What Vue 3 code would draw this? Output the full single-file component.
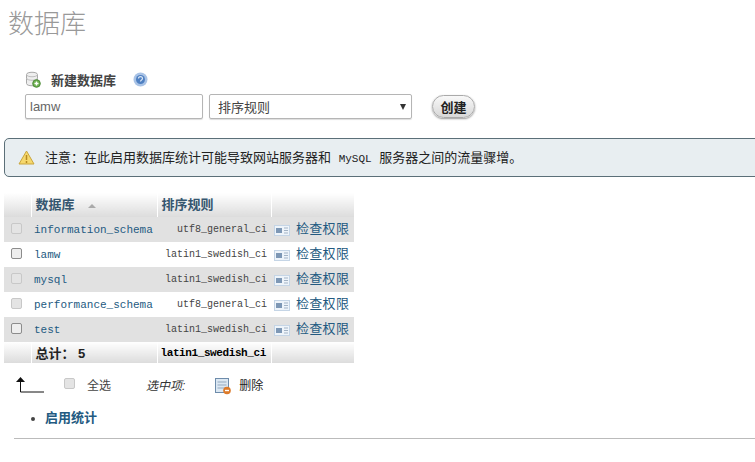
<template>
  <div class="page">
    <h1 class="title">数据库</h1>

    <form class="create" @submit.prevent>
      <div class="create__label">
        <svg class="icon" width="16" height="17" viewBox="0 0 16 17">
          <path d="M1.500 3.500c0-3 11-3 11 0v9c0 3-11 3-11 0z" fill="#eeeeee" stroke="#a8a8a8" />
          <path d="M1.500 3.500c0 3 11 3 11 0M1.500 7c0 3 11 3 11 0" fill="none" stroke="#bdbdbd" />
          <circle cx="11.500" cy="12.500" r="3.800" fill="#6cb04e" stroke="#4d8a38" />
          <path d="M9.500 12.500h4M11.500 10.500v4" stroke="#fff" stroke-width="1.400" />
        </svg>
        <strong>新建数据库</strong>
        <svg class="help" width="15" height="15" viewBox="0 0 15 15">
          <circle cx="7.500" cy="7.500" r="7" fill="#a9c3e6" />
          <circle cx="7.500" cy="7.500" r="4.500" fill="#4f80c2" />
          <path d="M5.500 6.500c0-2.600 4-2.600 4 0 0 1.500-2 1.500-2 3" fill="none" stroke="#dbe7f6" stroke-width="1.200" />
        </svg>
      </div>
      <div class="create__fields">
        <input class="input" value="lamw" />
        <div class="select">
          <span>排序规则</span>
          <i class="select__arrow"></i>
        </div>
        <button class="btn">创建</button>
      </div>
    </form>

    <div class="notice">
      <svg width="17" height="15" viewBox="0 0 17 15">
        <path d="M8.500 1 16 14H1z" fill="#f6d86d" stroke="#c9a53c" stroke-linejoin="round" />
        <path d="M8.500 5v5M8.500 11v2" stroke="#b78a22" stroke-width="1.500" />
      </svg>
      <span>注意：在此启用数据库统计可能导致网站服务器和 <span class="mono">MySQL</span> 服务器之间的流量骤增。</span>
    </div>

    <table class="dbs">
      <thead>
        <tr>
          <th></th>
          <th class="sort">数据库 <i class="sort__arrow"></i></th>
          <th>排序规则</th>
          <th></th>
        </tr>
      </thead>
      <tbody>
        <tr v-for="db in databases" :key="db.name">
          <td class="check"><span class="box" :class="{ off: db.system }"></span></td>
          <td class="name">{{ db.name }}</td>
          <td class="coll">{{ db.collation }}</td>
          <td class="act">
            <svg width="16" height="11" viewBox="0 0 16 11">
              <rect x="0.500" y="0.500" width="15" height="10" fill="#eef4fa" stroke="#c5d5e6" />
              <rect x="2" y="3" width="6" height="5" fill="#7d97b5" />
              <path d="M10 3h4M10 5.500h4M10 8h4" stroke="#a3b3c5" />
            </svg>
            <a>检查权限</a>
          </td>
        </tr>
      </tbody>
      <tfoot>
        <tr>
          <th></th>
          <th class="total">总计： 5</th>
          <th class="total-coll">latin1_swedish_ci</th>
          <th></th>
        </tr>
      </tfoot>
    </table>

    <div class="bulk">
      <svg class="bulk__arrow" width="30" height="17" viewBox="0 0 30 17">
        <path d="M5.500 5v11H29" fill="none" stroke="#111" />
        <path d="M1 6l4.500-5L10 6z" fill="#111" />
      </svg>
      <span class="box off"></span>
      <span class="bulk__all">全选</span>
      <em>选中项:</em>
      <svg class="bulk__icon" width="17" height="17" viewBox="0 0 17 17">
        <rect x="0.500" y="0.500" width="13" height="14" fill="#dce8f3" stroke="#6e8cab" />
        <path d="M2.500 4h9M2.500 7h9M2.500 10h9" stroke="#94a9bf" />
        <circle cx="12" cy="12.500" r="3.800" fill="#dd7a2a" />
        <path d="M10 12.500h4" stroke="#fff" stroke-width="1.400" />
      </svg>
      <span class="bulk__del">删除</span>
    </div>

    <ul class="links">
      <li><a>启用统计</a></li>
    </ul>

    <hr class="rule" />
  </div>
</template>

<script setup>
const databases = [
  { name: "information_schema", collation: "utf8_general_ci", system: true },
  { name: "lamw", collation: "latin1_swedish_ci", system: false },
  { name: "mysql", collation: "latin1_swedish_ci", system: true },
  { name: "performance_schema", collation: "utf8_general_ci", system: true },
  { name: "test", collation: "latin1_swedish_ci", system: false },
];
</script>

<style>
body {
  background: #fff;
  overflow: hidden;
}
</style>

<style scoped>
.page {
  width: 755px;
  height: 462px;
  overflow: hidden;
  font-family: "Liberation Sans", "Noto Sans CJK SC", sans-serif;
  font-size: 12px;
  color: #444;
}

.mono {
  margin: 0 4px;
  font-family: "Liberation Mono", monospace;
  font-size: 11px;
}

.title {
  margin: 0;
  padding: 6px 0 0 8px;
  height: 56px;
  box-sizing: border-box;
  font-size: 26px;
  line-height: 36px;
  font-weight: 300;
  color: #999;
}

.create {
  margin: 0 0 0 25px;
}

.create__label {
  display: flex;
  align-items: center;
  height: 38px;
  padding-top: 8px;
  box-sizing: border-box;
}

.create__label strong {
  margin-left: 10px;
  font-size: 13px;
  color: #444;
}

.help {
  margin-left: 17px;
}

.create__fields {
  display: flex;
  align-items: center;
}

.input {
  width: 178px;
  height: 25px;
  box-sizing: border-box;
  padding: 0 4px;
  border: 1px solid #b5b5b5;
  border-radius: 2px;
  font: 13px "Liberation Sans", sans-serif;
  color: #666;
  box-shadow: 0 1px 1px #ddd;
}

.select {
  display: flex;
  align-items: center;
  justify-content: space-between;
  width: 203px;
  height: 25px;
  box-sizing: border-box;
  margin-left: 6px;
  padding: 0 5px 0 8px;
  border: 1px solid #b5b5b5;
  border-radius: 2px;
  font-size: 13px;
  color: #444;
  box-shadow: 0 1px 1px #ddd;
}

.select__arrow {
  width: 0;
  height: 0;
  border-left: 3.500px solid transparent;
  border-right: 3.500px solid transparent;
  border-top: 6px solid #333;
}

.btn {
  width: 43px;
  height: 23px;
  margin-left: 20px;
  padding: 0;
  border: 1px solid #aaa;
  border-radius: 12px;
  background: linear-gradient(#f8f8f8, #d8d8d8);
  font-family: inherit;
  font-size: 13px;
  font-weight: 700;
  color: #222;
  box-shadow: 0 1px 2px #999;
}

.notice {
  display: flex;
  align-items: center;
  gap: 10px;
  width: 800px;
  height: 39px;
  box-sizing: border-box;
  margin: 19px 0 0 4px;
  padding: 0 0 3px 13px;
  border: 1px solid #5b6f78;
  border-radius: 5px;
  background: #e8eef1;
  font-size: 13px;
  color: #222;
}

.notice svg {
  margin-top: 3px;
}

.dbs {
  width: 350px;
  margin: 16px 0 0 4px;
  border-collapse: collapse;
  table-layout: fixed;
}

.dbs th {
  box-sizing: border-box;
  padding: 0 4px;
  text-align: left;
  border-left: 1px solid #fff;
  background: linear-gradient(#fff, #dcdcdc);
  font-size: 13px;
  color: #35566f;
}

.dbs thead th {
  padding-bottom: 3px;
}

.dbs th:first-child {
  width: 27px;
  border-left: 0;
}

.dbs th:nth-child(2) {
  width: 126px;
}

.dbs th:nth-child(3) {
  width: 114px;
}

.dbs thead tr {
  height: 24px;
}

.dbs tfoot tr {
  height: 21px;
}

.dbs tfoot th {
  color: #222;
}

.sort__arrow {
  display: inline-block;
  margin-left: 10px;
  vertical-align: 1px;
  border-left: 4px solid transparent;
  border-right: 4px solid transparent;
  border-bottom: 4px solid #aaa;
}

.dbs tbody tr {
  height: 25px;
}

.dbs tbody tr:nth-child(odd) {
  background: #e1e1e1;
}

.dbs td {
  padding: 0;
  white-space: nowrap;
  font-family: "Liberation Mono", monospace;
  font-size: 11px;
}

.check {
  padding-left: 7px !important;
}

.box {
  display: inline-block;
  width: 11px;
  height: 11px;
  box-sizing: border-box;
  margin-bottom: 2px;
  border: 1px solid #8c8c8c;
  border-radius: 2px;
  background: #eee;
  vertical-align: middle;
}

.box.off {
  border-color: #c8c8c8;
  background: #e4e4e4;
}

.name {
  padding-left: 3px !important;
  color: #235a81;
}

.coll {
  padding-right: 4px !important;
  text-align: right;
  font-size: 10px !important;
  color: #444;
}

.act {
  padding-left: 3px !important;
}

.act svg {
  vertical-align: -1px;
}

.act a {
  margin-left: 6px;
  position: relative;
  top: -2px;
  font-family: "Noto Sans CJK SC", sans-serif;
  font-size: 13px;
  letter-spacing: 0.300px;
  color: #235a81;
}

.total {
  font-size: 13px !important;
}

.total-coll {
  padding: 0 3px !important;
  font-family: "Liberation Mono", monospace;
  font-size: 11px !important;
  letter-spacing: -0.400px;
  color: #000 !important;
  white-space: nowrap;
}

.bulk {
  display: flex;
  align-items: center;
  height: 24px;
  margin: 10px 0 0 15px;
  padding-bottom: 2px;
  box-sizing: border-box;
}

.bulk__arrow {
  margin-right: 19px;
}

.bulk__all {
  margin-left: 12px;
  font-size: 12px;
}

.bulk em {
  margin: 0 30px 0 35px;
  font-size: 12px;
  color: #333;
}

.bulk__icon {
  margin-top: 5px;
}

.bulk__del {
  margin-left: 7px;
  color: #222;
}

.links {
  margin: 10px 0 0;
  padding: 0 0 0 45px;
  height: 22px;
  line-height: 22px;
}

.links a {
  font-size: 13px;
  font-weight: 700;
  color: #235a81;
}

.rule {
  width: 741px;
  margin: 9px 0 0 14px;
  border: 0;
  border-top: 1px solid #bbb;
}
</style>
